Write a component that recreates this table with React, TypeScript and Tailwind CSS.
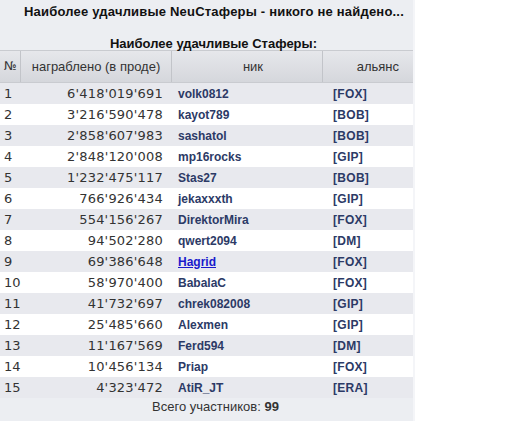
import React from 'react';

type Row = {
  amount: string;
  nick: string;
  ally: string;
  link?: boolean;
};

const rows: Row[] = [
  { amount: "6'418'019'691", nick: 'volk0812', ally: '[FOX]' },
  { amount: "3'216'590'478", nick: 'kayot789', ally: '[BOB]' },
  { amount: "2'858'607'983", nick: 'sashatol', ally: '[BOB]' },
  { amount: "2'848'120'008", nick: 'mp16rocks', ally: '[GIP]' },
  { amount: "1'232'475'117", nick: 'Stas27', ally: '[BOB]' },
  { amount: "766'926'434", nick: 'jekaxxxth', ally: '[GIP]' },
  { amount: "554'156'267", nick: 'DirektorMira', ally: '[FOX]' },
  { amount: "94'502'280", nick: 'qwert2094', ally: '[DM]' },
  { amount: "69'386'648", nick: 'Hagrid', ally: '[FOX]', link: true },
  { amount: "58'970'400", nick: 'BabalaC', ally: '[FOX]' },
  { amount: "41'732'697", nick: 'chrek082008', ally: '[GIP]' },
  { amount: "25'485'660", nick: 'Alexmen', ally: '[GIP]' },
  { amount: "11'167'569", nick: 'Ferd594', ally: '[DM]' },
  { amount: "10'456'134", nick: 'Priap', ally: '[FOX]' },
  { amount: "4'323'472", nick: 'AtiR_JT', ally: '[ERA]' },
];

const regular = "font-['DejaVu_Sans',sans-serif]";
const arial = "font-['Liberation_Sans',Arial,sans-serif]";
const bold = `${arial} font-bold`;

export default function App() {
  return (
    <div className="w-[512px] h-[421px] bg-white overflow-hidden">
      <div className="w-[415px] h-full bg-[#eceef2] border-r-2 border-[#f4f5f8] overflow-hidden">
        {/* titles */}
        <div className={`${bold} pl-[24px] pt-[4px] h-[36px] text-[13px] leading-[16px] text-[#111] whitespace-nowrap tracking-[0.2px]`}>
          Наиболее удачливые NeuСтаферы - никого не найдено...
        </div>
        <div className={`${bold} h-[14px] pl-[14px] text-center text-[13px] leading-[16px] text-[#111]`}>
          Наиболее удачливые Стаферы:
        </div>

        {/* table header */}
        <div
          className={`${arial} grid grid-cols-[21px_151px_151px_1fr] h-[33px] border-t border-b border-[#c9cbd0] bg-gradient-to-b from-[#e6e7eb] to-[#d5d7dc] text-[#333] text-[13px] leading-[31px]`}
        >
          <div className={`${regular} text-[12px] pl-[4px] border-r border-[#c2c4c9]`}>№</div>
          <div className="text-center border-r border-[#c2c4c9]">награблено (в проде)</div>
          <div className="pl-[12px] text-center border-r border-[#c2c4c9]">ник</div>
          <div className="pr-[14px] text-right">альянс</div>
        </div>

        {/* rows */}
        {rows.map((r, i) => (
          <div
            key={r.nick}
            className={`grid grid-cols-[21px_151px_151px_1fr] h-[21px] items-center ${
              i % 2 === 0 ? 'bg-[#e8e9ee]' : 'bg-white'
            }`}
          >
            <div className={`${regular} pl-[4px] text-[13px] text-[#333]`}>{i + 1}</div>
            <div className={`${regular} pr-[9px] text-right text-[13px] tracking-[0.2px] text-[#333]`}>
              {r.amount}
            </div>
            <div
              className={`${bold} pl-[6px] text-[12px] ${
                r.link ? 'text-[#1a1acc] underline' : 'text-[#2c3a66]'
              }`}
            >
              {r.nick}
            </div>
            <div className={`${bold} pl-[10px] text-[12px] tracking-[0.3px] text-[#2c3a66]`}>{r.ally}</div>
          </div>
        ))}

        {/* footer */}
        <div className={`${arial} pl-[18px] text-center text-[13px] leading-[18px] text-[#333]`}>
          Всего участников: <b>99</b>
        </div>
      </div>
    </div>
  );
}
